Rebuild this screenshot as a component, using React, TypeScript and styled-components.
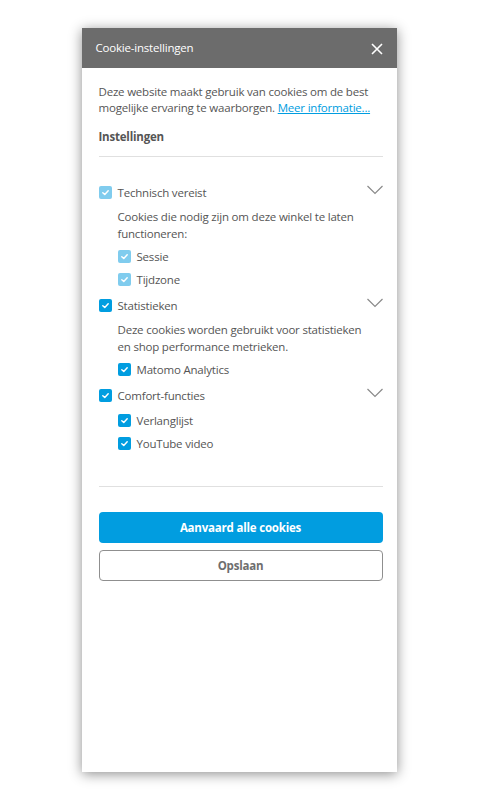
import React from "react";
import styled, { createGlobalStyle } from "styled-components";

const Global = createGlobalStyle`
  html, body { margin: 0; padding: 0; background: #fff; }
  body { font-family: "Open Sans", "Noto Sans", sans-serif; letter-spacing: -0.2px; }
`;

const Page = styled.div`
  width: 480px;
  height: 800px;
  display: flex;
  justify-content: center;
  padding-top: 28px;
  box-sizing: border-box;
`;

const Modal = styled.div`
  width: 315px;
  height: 744px;
  margin-left: -2px;
  background: #fff;
  box-shadow: 0 2px 12px rgba(0, 0, 0, 0.45);
  display: flex;
  flex-direction: column;
`;

const Header = styled.div`
  height: 40px;
  background: #6c6c6c;
  color: #fff;
  display: flex;
  align-items: center;
  justify-content: space-between;
  padding: 0 12px 2px 14px;
  box-sizing: border-box;
  font-size: 11.5px;
`;

const CloseBtn = styled.button`
  border: 0;
  background: none;
  padding: 0;
  margin-top: 4px;
  width: 16px;
  height: 16px;
  display: flex;
  align-items: center;
  justify-content: center;
  cursor: pointer;
`;

const Body = styled.div`
  padding: 16px 14px 0 17px;
  color: #555;
  font-size: 11.5px;
`;

const Intro = styled.p`
  margin: 0;
  line-height: 16px;
`;

const Link = styled.a`
  color: #009de0;
  text-decoration: underline;
`;

const Heading = styled.div`
  font-weight: 700;
  margin-top: 12px;
  line-height: 17px;
`;

const Divider = styled.hr<{ $mt: number; $mb: number }>`
  border: 0;
  border-top: 1px solid #e0e0e0;
  margin: ${(p) => p.$mt}px 0 ${(p) => p.$mb}px;
`;

const Group = styled.div`
  margin-bottom: 8px;
`;

const GroupHead = styled.div`
  display: flex;
  align-items: center;
  justify-content: space-between;
  height: 18px;
`;

const List = styled.div<{ $pt: number }>`
  padding-top: ${(p) => p.$pt}px;
`;

const Row = styled.label<{ $indent?: boolean }>`
  display: flex;
  align-items: center;
  gap: 6px;
  height: 18px;
  padding-left: ${(p) => (p.$indent ? "19px" : "0")};
  margin-top: ${(p) => (p.$indent ? "5px" : "0")};
`;

const Box = styled.span<{ $disabled?: boolean }>`
  width: 13px;
  height: 13px;
  border-radius: 2px;
  background: ${(p) => (p.$disabled ? "#80ccee" : "#019de0")};
  display: inline-flex;
  align-items: center;
  justify-content: center;
  flex: none;
`;

const Desc = styled.p`
  margin: 7px 12px 0 19px;
  line-height: 17px;
`;

const Buttons = styled.div`
  display: flex;
  flex-direction: column;
  gap: 7px;
`;

const Primary = styled.button`
  height: 31px;
  border: 0;
  border-radius: 4px;
  background: #019de0;
  color: #fff;
  font-family: inherit;
  letter-spacing: inherit;
  font-weight: 700;
  font-size: 11.5px;
`;

const Secondary = styled.button`
  height: 31px;
  border: 1px solid #8f8f8f;
  border-radius: 4px;
  background: #fff;
  color: #6e6e6e;
  font-family: inherit;
  letter-spacing: inherit;
  font-weight: 700;
  font-size: 11.5px;
`;

const Check = () => (
  <svg width="9" height="9" viewBox="0 0 10 10">
    <path d="M2 5.2 L4.2 7.2 L8 3" fill="none" stroke="#fff" strokeWidth="1.6" strokeLinecap="round" strokeLinejoin="round" />
  </svg>
);

const Chevron = () => (
  <svg width="16" height="10" viewBox="0 0 16 10" style={{ marginTop: -4 }}>
    <path d="M0.5 1 L8 8.5 L15.5 1" fill="none" stroke="#8a8a8a" strokeWidth="1.2" />
  </svg>
);

const Item = ({ label, indent, disabled }: { label: string; indent?: boolean; disabled?: boolean }) => (
  <Row $indent={indent}>
    <Box $disabled={disabled}>
      <Check />
    </Box>
    {label}
  </Row>
);

export default function App() {
  return (
    <>
      <Global />
      <Page>
        <Modal>
          <Header>
            <span>Cookie-instellingen</span>
            <CloseBtn aria-label="Sluiten">
              <svg width="12" height="12" viewBox="0 0 12 12">
                <path d="M1 1 L11 11 M11 1 L1 11" stroke="#fff" strokeWidth="1.6" />
              </svg>
            </CloseBtn>
          </Header>
          <Body>
            <Intro>
              Deze website maakt gebruik van cookies om de best mogelijke ervaring te waarborgen.{" "}
              <Link href="#">Meer informatie...</Link>
            </Intro>
            <Heading>Instellingen</Heading>
            <Divider $mt={11} $mb={26} />
            <Group>
              <GroupHead>
                <Item label="Technisch vereist" disabled />
                <Chevron />
              </GroupHead>
              <Desc>Cookies die nodig zijn om deze winkel te laten functioneren:</Desc>
              <List $pt={0}>
                <Item label="Sessie" indent disabled />
                <Item label="Tijdzone" indent disabled />
              </List>
            </Group>
            <Group>
              <GroupHead>
                <Item label="Statistieken" />
                <Chevron />
              </GroupHead>
              <Desc>Deze cookies worden gebruikt voor statistieken en shop performance metrieken.</Desc>
              <List $pt={0}>
                <Item label="Matomo Analytics" indent />
              </List>
            </Group>
            <Group>
              <GroupHead>
                <Item label="Comfort-functies" />
                <Chevron />
              </GroupHead>
              <List $pt={2}>
                <Item label="Verlanglijst" indent />
                <Item label="YouTube video" indent />
              </List>
            </Group>
            <Divider $mt={34} $mb={25} />
            <Buttons>
              <Primary>Aanvaard alle cookies</Primary>
              <Secondary>Opslaan</Secondary>
            </Buttons>
          </Body>
        </Modal>
      </Page>
    </>
  );
}
